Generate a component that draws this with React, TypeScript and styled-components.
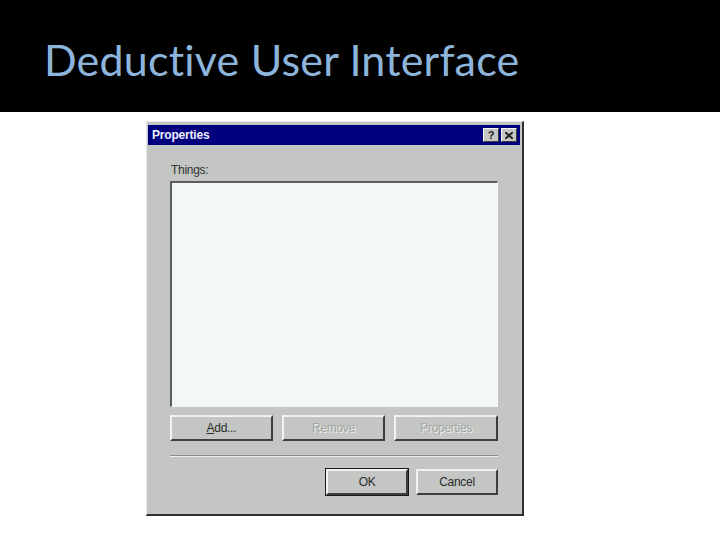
import React from "react";
import styled, { createGlobalStyle } from "styled-components";

const Global = createGlobalStyle`
  html, body { margin: 0; padding: 0; background: #ffffff; }
  body { width: 720px; height: 540px; overflow: hidden; }
`;

const Page = styled.div`
  width: 720px;
  height: 540px;
  display: flex;
  flex-direction: column;
  background: #ffffff;
`;

const Header = styled.header`
  height: 112px;
  background: #000000;
  display: flex;
  align-items: flex-start;
  padding-left: 44px;
  box-sizing: border-box;
`;

const Title = styled.h1`
  margin: 0;
  margin-top: 35px;
  font-family: Lato, "Open Sans", sans-serif;
  font-weight: 400;
  font-size: 43px;
  line-height: 50px;
  color: #8db5dc;
  font-variant-ligatures: none;
  letter-spacing: 0.2px;
`;

const Stage = styled.div`
  padding: 9px 0 0 146px;
`;

const Dialog = styled.div`
  width: 378px;
  height: 395px;
  box-sizing: border-box;
  background: #c3c6c3;
  border-top: 1px solid #e6e9e6;
  border-left: 1px solid #e6e9e6;
  border-right: 2px solid #2e302e;
  border-bottom: 2px solid #2e302e;
  padding: 3px 2px 2px 1px;
  display: flex;
  flex-direction: column;
  font-family: "Liberation Sans", Arial, sans-serif;
`;

const TitleBar = styled.div`
  height: 20px;
  background: #00007e;
  display: flex;
  align-items: center;
  padding: 0 3px 0 4px;
`;

const Caption = styled.span`
  flex: 1;
  color: #eef0ff;
  font-weight: 700;
  font-size: 12px;
  letter-spacing: -0.2px;
`;

const CapButton = styled.div<{ gap?: number }>`
  width: 16px;
  height: 14px;
  box-sizing: border-box;
  background: #c3c6c3;
  border-top: 1px solid #f4f6f4;
  border-left: 1px solid #f4f6f4;
  border-right: 1px solid #3a3c3a;
  border-bottom: 1px solid #3a3c3a;
  display: flex;
  align-items: center;
  justify-content: center;
  margin-left: ${(p) => p.gap ?? 0}px;
  color: #202020;
  font-weight: 700;
  font-size: 11px;
  line-height: 1;
`;

const Body = styled.div`
  flex: 1;
  display: flex;
  flex-direction: column;
  padding: 18px 22px 0 22px;
`;

const Label = styled.div`
  font-size: 12px;
  color: #303230;
  height: 18px;
  padding-left: 1px;
  letter-spacing: -0.3px;
`;

const ListBox = styled.div`
  height: 226px;
  box-sizing: border-box;
  background: #f4f8f4;
  border-top: 2px solid #5a5c5a;
  border-left: 2px solid #5a5c5a;
  border-right: 1px solid #f4f6f4;
  border-bottom: 1px solid #f4f6f4;
`;

const Row = styled.div<{ justify?: string; top: number }>`
  display: flex;
  gap: ${(p) => (p.justify ? 8 : 9)}px;
  justify-content: ${(p) => p.justify ?? "flex-start"};
  margin-top: ${(p) => p.top}px;
`;

const Button = styled.div<{ w: number; isDefault?: boolean; disabled?: boolean }>`
  width: ${(p) => p.w}px;
  height: 26px;
  box-sizing: border-box;
  background: #c3c6c3;
  border-top: 2px solid #f0f3f0;
  border-left: 2px solid #f0f3f0;
  border-right: 2px solid #3c3e3c;
  border-bottom: 2px solid #3c3e3c;
  outline: ${(p) => (p.isDefault ? "1px solid #1a1a1a" : "none")};
  outline-offset: 0;
  display: flex;
  align-items: center;
  justify-content: center;
  font-size: 12px;
  letter-spacing: -0.3px;
  color: ${(p) => (p.disabled ? "#a4a7a4" : "#2a2c2a")};
  text-shadow: ${(p) => (p.disabled ? "1px 1px 0 #eef0ee" : "none")};
`;

const Separator = styled.div`
  margin-top: 14px;
  height: 0;
  border-top: 1px solid #8a8c8a;
  border-bottom: 1px solid #f0f3f0;
`;

const U = styled.span`
  text-decoration: underline;
`;

export default function App() {
  return (
    <Page>
      <Global />
      <Header>
        <Title>Deductive User Interface</Title>
      </Header>
      <Stage>
        <Dialog>
          <TitleBar>
            <Caption>Properties</Caption>
            <CapButton>?</CapButton>
            <CapButton gap={2}>
              <svg width="8" height="7" viewBox="0 0 8 7">
                <path d="M0 0 L8 7 M8 0 L0 7" stroke="#202020" strokeWidth="2" />
              </svg>
            </CapButton>
          </TitleBar>
          <Body>
            <Label>Things:</Label>
            <ListBox />
            <Row top={8}>
              <Button w={103}>
                <U>A</U>dd...
              </Button>
              <Button w={104} disabled>
                Remove
              </Button>
              <Button w={104} disabled>
                Properties
              </Button>
            </Row>
            <Separator />
            <Row top={12} justify="flex-end">
              <Button w={82} isDefault>
                OK
              </Button>
              <Button w={82}>Cancel</Button>
            </Row>
          </Body>
        </Dialog>
      </Stage>
    </Page>
  );
}
